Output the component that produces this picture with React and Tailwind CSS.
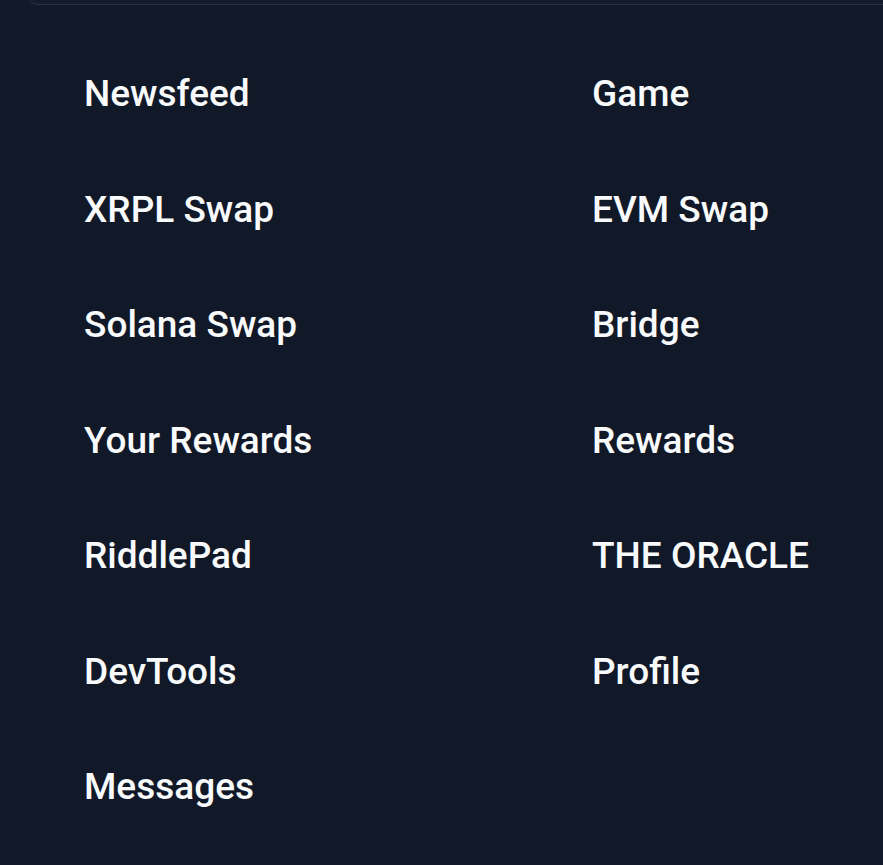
const left = ['Newsfeed', 'XRPL Swap', 'Solana Swap', 'Your Rewards', 'RiddlePad', 'DevTools', 'Messages'];
const right = ['Game', 'EVM Swap', 'Bridge', 'Rewards', 'THE ORACLE', 'Profile'];

export default function App() {
    const items = [];
    left.forEach((l, i) => {
        items.push(l);
        if (right[i]) items.push(right[i]);
    });

    return (
        <div className="h-[865px] overflow-hidden bg-[#111827]" style={{ fontFamily: 'Roboto, sans-serif' }}>
            {/* bottom edge of header card */}
            <div className="ml-[26px] -mr-[20px] -mt-[30px] h-[35px] rounded-xl border border-[#2a3140] bg-[#141b2b]" />

            <div className="grid grid-cols-[508px_1fr] pl-[84px] pt-[31px]">
                {items.map((name) => (
                    <a
                        key={name}
                        href="#"
                        className="flex h-[115.5px] items-center text-[37px] font-medium leading-none text-[#f8fafc]"
                    >
                        {name}
                    </a>
                ))}
            </div>
        </div>
    );
}
